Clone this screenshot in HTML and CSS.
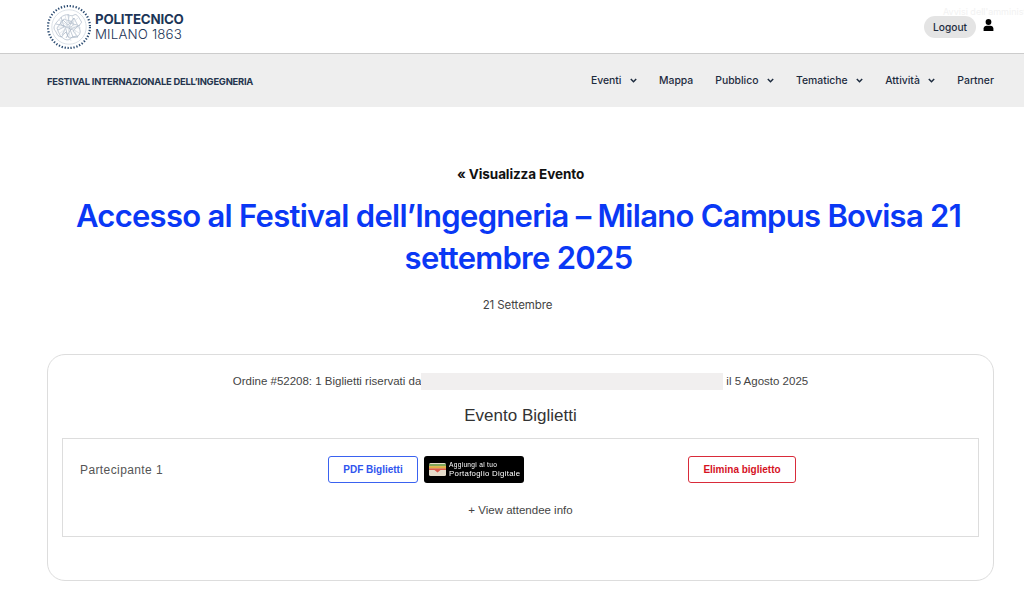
FILE: index.html
```html
<!DOCTYPE html>
<html lang="it">
<head>
<meta charset="utf-8">
<title>Accesso al Festival dell'Ingegneria</title>
<link rel="stylesheet" href="styles.css">
</head>
<body>
<header class="top">
  <a class="logo" href="#">
    <svg class="seal" width="44" height="46" viewBox="0 0 44 46">
      <circle cx="22" cy="23" r="21" fill="none" stroke="#2a4a70" stroke-width="2.2" stroke-dasharray="1.3 1.7"/>
      <circle cx="22" cy="23" r="17.2" fill="none" stroke="#b9c4d1" stroke-width=".5"/>
      <g fill="none" stroke="#a9b6c6" stroke-width=".7">
        <path d="M9 19c3-3 5-7 9-8s6 2 9 0 5 3 7 6-3 3-2 6 2 5 0 8-6 0-8 3-6 2-8 0-5-1-6-4-3-4-3-6 1-3 2-5z"/>
        <path d="M10 24l6-8 5 5 6-7 4 8-5 5 5 6-9 1-3-6-5 5-3-6z"/>
        <path d="M14 13l3 10-6 3M21 10l1 9 8 2M27 14l-5 9 4 10M33 21l-9 4-5 9M9 20l9 2 3 11M15 31l4-8 7 3M17 15c3 2 7 1 9 4s-4 5-6 4-5 0-6-3 1-3 3-5z"/>
      </g>
      <g fill="none" stroke="#d0d8e1" stroke-width=".6">
        <path d="M12 16l20 13M12 30l19-16M18 11l6 26M10 23l24 1M15 34l8-23M25 11l4 22"/>
      </g>
    </svg>
    <span class="logo-text"><b>POLITECNICO</b><span>MILANO 1863</span></span>
  </a>
  <div class="account">
    <span class="admin-note">Avvisi dell'amministratore</span>
    <a class="logout" href="#">Logout</a>
    <svg class="user" width="11" height="12" viewBox="0 0 11 12"><circle cx="5.5" cy="3" r="2.9" fill="#000"/><path d="M.6 12V9.6C.6 7.8 2 6.7 3.6 6.7h3.8c1.6 0 3 1.1 3 2.9V12z" fill="#000"/></svg>
  </div>
</header>
<nav class="bar">
  <a class="site" href="#">FESTIVAL INTERNAZIONALE DELL’INGEGNERIA</a>
  <ul class="menu">
    <li>Eventi<svg class="chev" width="7" height="5" viewBox="0 0 7 5"><path d="M.8 1l2.7 2.7L6.2 1" fill="none" stroke="#1d2b3e" stroke-width="1.5"/></svg></li>
    <li>Mappa</li>
    <li>Pubblico<svg class="chev" width="7" height="5" viewBox="0 0 7 5"><path d="M.8 1l2.7 2.7L6.2 1" fill="none" stroke="#1d2b3e" stroke-width="1.5"/></svg></li>
    <li>Tematiche<svg class="chev" width="7" height="5" viewBox="0 0 7 5"><path d="M.8 1l2.7 2.7L6.2 1" fill="none" stroke="#1d2b3e" stroke-width="1.5"/></svg></li>
    <li>Attività<svg class="chev" width="7" height="5" viewBox="0 0 7 5"><path d="M.8 1l2.7 2.7L6.2 1" fill="none" stroke="#1d2b3e" stroke-width="1.5"/></svg></li>
    <li>Partner</li>
  </ul>
</nav>
<main class="page">
  <a class="back" href="#">« Visualizza Evento</a>
  <h1 class="title">Accesso al Festival dell’Ingegneria – Milano Campus Bovisa 21 settembre 2025</h1>
  <p class="date">21 Settembre</p>
  <section class="order">
    <p class="order-line"><span>Ordine #52208: 1 Biglietti riservati da</span><span class="redact"></span><span>il 5 Agosto 2025</span></p>
    <h2 class="order-title">Evento Biglietti</h2>
    <div class="ticket">
      <div class="ticket-row">
        <span class="attendee">Partecipante 1</span>
        <div class="ticket-actions">
          <a class="btn btn-pdf" href="#">PDF Biglietti</a>
          <a class="wallet" href="#">
            <svg width="17" height="13" viewBox="0 0 17 13"><rect width="17" height="13" rx="1.5" fill="#e5dccb"/><rect y="1" width="17" height="2.2" fill="#7fa65a"/><rect y="3.2" width="17" height="2.2" fill="#e0b040"/><rect y="5.4" width="17" height="1.6" fill="#d9584a"/><path d="M5.5 7h6L8.5 9.5z" fill="#d9584a"/></svg>
            <span class="wallet-text"><span class="wallet-small">Aggiungi al tuo</span><span>Portafoglio Digitale</span></span>
          </a>
        </div>
        <a class="btn btn-del" href="#">Elimina biglietto</a>
      </div>
      <a class="view-info" href="#">+ View attendee info</a>
    </div>
  </section>
</main>
</body>
</html>
```
FILE: styles.css
```css
* { box-sizing: border-box; }
html, body { margin: 0; padding: 0; }
body { background: #fff; font-family: Inter, "Liberation Sans", sans-serif; color: #333; height: 613px; overflow: hidden; }
a { color: inherit; text-decoration: none; }

.top { height: 54px; padding: 0 30px 0 47px; display: flex; justify-content: space-between; align-items: center; border-bottom: 1px solid #ccc; background: #fff; }
.logo { display: flex; align-items: center; gap: 4px; color: #1c3557; }
.seal { display: block; }
.logo-text { display: flex; flex-direction: column; font-size: 13.3px; line-height: 15px; letter-spacing: -.2px; }
.logo-text b { font-weight: 700; }
.logo-text span { font-weight: 300; letter-spacing: .15px; }

.account { position: relative; display: flex; align-items: center; gap: 7px; }
.admin-note { position: absolute; top: -10px; left: 19px; font-size: 9px; color: #f2f2f2; white-space: nowrap; }
.logout { background: #e4e4e4; border-radius: 11px; height: 22px; line-height: 22px; padding: 0 9px; font-size: 10.2px; font-weight: 500; color: #1d2b3e; }
.user { display: block; margin-bottom: 3px; }

.bar { height: 53px; background: #eee; padding: 0 30px 0 47px; display: flex; align-items: center; justify-content: space-between; color: #1d2b3e; }
.site { font-size: 9.4px; font-weight: 700; color: #24344d; letter-spacing: -.25px; margin-top: 1px; }
.menu { list-style: none; margin: 0; padding: 0 0 1px; display: flex; gap: 22px; font-size: 10.4px; font-weight: 500; }
.menu li { display: flex; align-items: center; gap: 8.5px; }
.chev { display: block; }

.page { padding: 59px 30px 0 47px; text-align: center; }
.back { display: block; font-size: 13.5px; line-height: 17px; font-weight: 700; color: #111; letter-spacing: -.1px; }
.title { margin: 12px auto 0; padding-right: 4px; width: 904px; font-size: 31px; line-height: 42px; font-weight: 600; color: #0a38f5; letter-spacing: -.72px; }
.date { margin: 18px 0 0; padding-right: 6px; font-size: 11.5px; line-height: 16px; color: #444; letter-spacing: -.1px; }

.order { margin-top: 41px; height: 227px; border: 1px solid #ddd; border-radius: 18px; padding: 17px 14px 0; font-family: "Liberation Sans", Arial, sans-serif; }
.order-line { margin: 0; font-size: 11.5px; line-height: 18px; color: #444; display: flex; justify-content: center; align-items: center; }
.redact { display: block; width: 302px; height: 17px; margin: 0 3px 0 0; background: #f1efef; }
.order-title { margin: 16px 0 0; font-size: 17px; line-height: 20px; font-weight: 400; color: #333; }
.ticket { margin-top: 12px; height: 99px; border: 1px solid #ddd; padding: 16px 0 0 17px; }
.ticket-row { display: flex; align-items: center; height: 28px; }
.attendee { width: 248px; text-align: left; font-size: 12px; letter-spacing: .4px; color: #555; position: relative; top: 1px; }
.ticket-actions { display: flex; gap: 6px; width: 360px; }
.btn { display: block; height: 27px; line-height: 25px; text-align: center; border-radius: 3px; font-size: 10px; font-weight: 700; background: #fff; }
.btn-pdf { width: 90px; border: 1px solid #3a62f0; color: #2f55ee; }
.btn-del { width: 108px; border: 1px solid #d92b3a; color: #d5121f; }
.wallet { width: 100px; height: 27px; background: #000; border-radius: 3px; display: flex; align-items: center; gap: 3px; padding-left: 5px; color: #fff; will-change: transform; }
.wallet-text { display: flex; flex-direction: column; font-size: 7.8px; line-height: 8.5px; font-weight: 400; text-align: left; letter-spacing: .3px; white-space: nowrap; }
.wallet-small { font-size: 6.6px; }
.view-info { display: block; margin: 19px 0 0 -17px; font-size: 11.5px; line-height: 16px; color: #444; }
```
